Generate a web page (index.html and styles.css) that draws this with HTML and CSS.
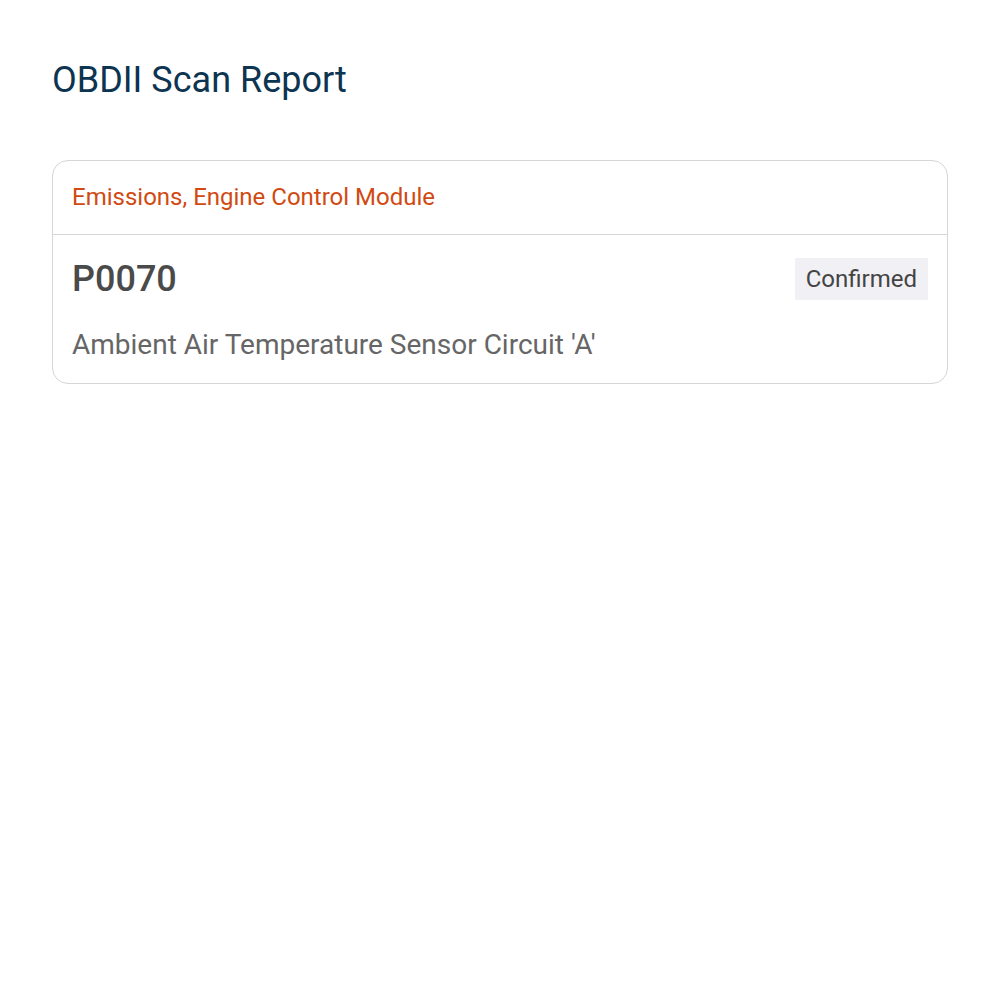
FILE: index.html
```html
<!DOCTYPE HTML>
<html lang="en">
<head>
    <meta charset="UTF-8">
    <meta name="viewport" content="width=device-width, initial-scale=1.0">
    <title>OBDII Scan Report</title>
    <link rel="stylesheet" href="styles.css">
</head>
<body>
    <div class="page">
        <h1 class="title">OBDII Scan Report</h1>

        <div class="card">
            <div class="card-head">Emissions, Engine Control Module</div>
            <div class="card-body">
                <div class="code-row">
                    <span class="code">P0070</span>
                    <span class="badge">Confirmed</span>
                </div>
                <div class="desc">Ambient Air Temperature Sensor Circuit 'A'</div>
            </div>
        </div>
    </div>
</body>
</html>
```

FILE: styles.css
```css
body {
    margin: 0;
    background-color: #ffffff;
    font-family: Roboto, "Liberation Sans", sans-serif;
}

.page {
    padding: 58px 52px;
}

.title {
    margin: 0 0 58px 0;
    font-size: 36px;
    font-weight: 400;
    line-height: 44px;
    color: #0d3450;
}

.card {
    border: 1px solid #d6d6d9;
    border-radius: 16px;
}

.card-head {
    padding: 21px 19px 22px 19px;
    font-size: 24px;
    line-height: 30px;
    color: #d14a12;
    border-bottom: 1px solid #d6d6d9;
}

.card-body {
    padding: 23px 19px 21px 19px;
}

.code-row {
    display: flex;
    justify-content: space-between;
    align-items: center;
}

.code {
    font-size: 36px;
    font-weight: 500;
    line-height: 42px;
    color: #4a4a4a;
}

.badge {
    padding: 0 11px;
    font-size: 24px;
    line-height: 42px;
    color: #444444;
    background-color: #f1f0f5;
}

.desc {
    margin-top: 28px;
    font-size: 28px;
    line-height: 34px;
    color: #666666;
}
```
